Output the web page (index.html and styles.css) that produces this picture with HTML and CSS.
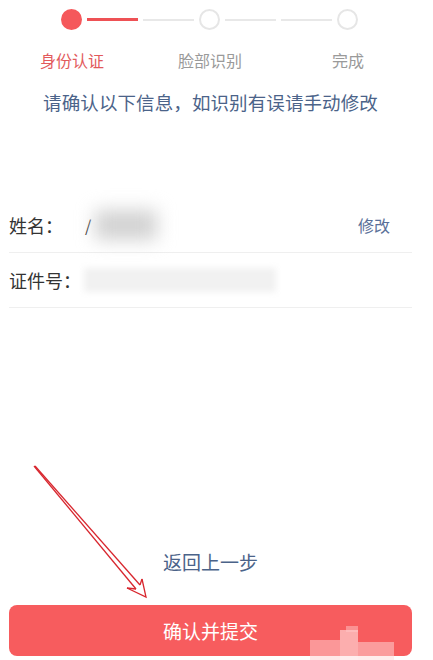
FILE: index.html
```html
<!DOCTYPE html>
<html lang="zh">
<head>
<meta charset="utf-8">
<link rel="stylesheet" href="styles.css">
</head>
<body>
<div class="page">
  <div class="steps">
    <span class="dot active"></span>
    <span class="line active"></span>
    <span class="line"></span>
    <span class="dot"></span>
    <span class="line"></span>
    <span class="line"></span>
    <span class="dot"></span>
  </div>
  <div class="labels">
    <span class="label active">身份认证</span>
    <span class="label">脸部识别</span>
    <span class="label">完成</span>
  </div>
  <p class="notice">请确认以下信息，如识别有误请手动修改</p>

  <div class="rows">
    <div class="row">
      <span class="key">姓名：</span>
      <span class="value"><span class="first">/</span><span class="blur dark"></span></span>
      <span class="edit">修改</span>
    </div>
    <div class="row">
      <span class="key">证件号：</span>
      <span class="value"><span class="blur light"></span></span>
    </div>
  </div>

  <div class="back">返回上一步</div>
  <div class="submit">确认并提交</div>

  <div class="mark">
    <span class="m1"></span><span class="m2"></span><span class="m3"></span><span class="m4"></span>
  </div>

  <svg class="arrow" width="433" height="660" viewBox="0 0 433 660">
    <g fill="none" stroke="#d8262e" stroke-width="1.3" stroke-linejoin="miter">
      <line x1="34" y1="466" x2="136" y2="589"/>
      <line x1="35" y1="466" x2="140" y2="585"/>
      <polyline points="127,588 146,597 142,579"/>
      <line x1="127" y1="588" x2="136" y2="589"/>
      <line x1="142" y1="579" x2="140" y2="585"/>
    </g>
  </svg>
</div>
</body>
</html>
```

FILE: styles.css
```css
* { box-sizing: border-box; }
html, body { margin: 0; padding: 0; background: #fff; }
body {
  font-family: "Noto Sans CJK SC", "Noto Sans", sans-serif;
  color: #333;
}
.page {
  position: relative;
  width: 433px;
  height: 660px;
  overflow: hidden;
}
.steps {
  display: flex;
  align-items: center;
  gap: 5px;
  padding: 9px 0 0 61px;
  height: 30px;
}
.dot {
  width: 21px;
  height: 21px;
  border-radius: 50%;
  border: 2px solid #e6e6e6;
  flex: none;
}
.dot.active { background: #f5585b; border-color: #f5585b; }
.line {
  width: 51px;
  height: 2px;
  background: #e8e8e8;
  flex: none;
}
.line.active { background: #ee5155; height: 3px; }

.labels {
  display: flex;
  gap: 38px;
  padding-left: 22px;
  margin-top: 19px;
}
.label {
  width: 100px;
  text-align: center;
  font-size: 16px;
  line-height: 22px;
  color: #9a9a9a;
}
.label.active { color: #e25a5c; }

.notice {
  margin: 18px 0 0 0;
  text-align: center;
  padding-right: 12px;
  font-size: 18.5px;
  line-height: 26px;
  color: #4b6389;
  letter-spacing: 0.1px;
}

.rows {
  margin-top: 83px;
  padding: 0 21px 0 9px;
}
.row {
  display: flex;
  align-items: center;
  height: 55px;
  border-bottom: 1px solid #efefef;
}
.key {
  width: 75px;
  font-size: 18px;
  color: #333;
  flex: none;
}
.value {
  flex: 1;
  display: flex;
  align-items: center;
  height: 100%;
}
.first { font-size: 16px; color: #333; margin-left: 1px; }
.blur { display: block; }
.blur.dark {
  width: 62px;
  height: 30px;
  background: #d2d2d2;
  filter: blur(9px);
  margin-left: 4px;
}
.blur.light {
  width: 192px;
  height: 24px;
  background: #f1f1f1;
  filter: blur(3px);
}
.edit {
  font-size: 16px;
  color: #5a7099;
  margin-right: 22px;
}

.back {
  margin-top: 240px;
  text-align: center;
  padding-right: 12px;
  font-size: 19px;
  line-height: 28px;
  color: #4b6389;
}
.submit {
  margin: 29px 21px 0 9px;
  height: 51px;
  border-radius: 8px;
  background: #f75c5e;
  color: #fff;
  font-size: 19px;
  display: flex;
  align-items: center;
  justify-content: center;
}

.mark { position: absolute; left: 0; top: 0; }
.mark span { position: absolute; background: rgba(255, 228, 228, 0.6); }
.mark .m1 { left: 340px; top: 630px; width: 18px; height: 30px; }
.mark .m2 { left: 310px; top: 640px; width: 30px; height: 20px; background: rgba(255, 210, 210, 0.5); }
.mark .m3 { left: 358px; top: 642px; width: 36px; height: 18px; background: rgba(255, 220, 220, 0.5); }
.mark .m4 { left: 346px; top: 626px; width: 12px; height: 6px; background: rgba(255, 200, 200, 0.5); }

.arrow { position: absolute; left: 0; top: 0; pointer-events: none; }
```
